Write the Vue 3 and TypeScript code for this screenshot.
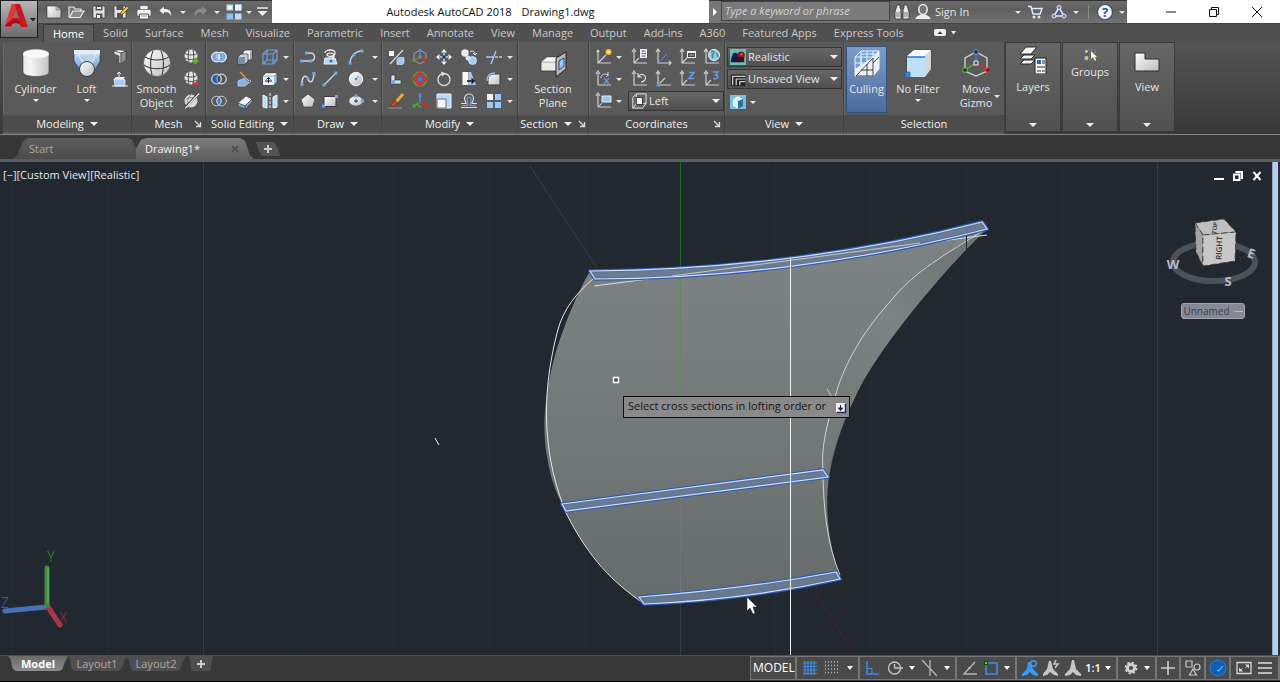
<script setup lang="ts">
import { ref } from 'vue'

type Cell = { icon: string; label: string } | 'caret' | 'gap'

const icons: Record<string, string> = {
  // quick access
  new: '<path d="M2 3h9l5 4v8H2z" fill="url(#gWhite)" stroke="#2d2d2d" stroke-width=".6"/><path d="M11 3v4h5" fill="#bbb" stroke="#666" stroke-width=".6"/>',
  open: '<path d="M2 14V4h5l1 2h6v2" fill="#777" stroke="#e6e6e6" stroke-width="1.2"/><path d="M2.500 14.500L6 8h11l-4 6.500z" fill="#8c8c8c" stroke="#f0f0f0" stroke-width="1.200"/>',
  save: '<path d="M3 3h11l1 1v11H3z" fill="#dfe3e8" stroke="#333" stroke-width=".7"/><path d="M5.500 3h7v4.500h-7zM6 10.500h6.500V15H6z" fill="#555"/><path d="M7 4h4v2H7zM7 12h3v3H7z" fill="#eee"/>',
  saveas: '<path d="M2 3h11l1 1v11H2z" fill="#dfe3e8" stroke="#333" stroke-width=".7"/><path d="M4.500 3h7v4h-7zM5 10h6v5H5z" fill="#555"/><path d="M8 12l1-3 6-6 2 2-6 6z" fill="#eeb64a" stroke="#5d3c10" stroke-width=".7"/>',
  plot: '<path d="M5 7V2.500h8V7" fill="#eee" stroke="#444" stroke-width=".6"/><rect x="2" y="6.500" width="14" height="6.500" rx="1" fill="#f2f2f2" stroke="#444" stroke-width=".6"/><path d="M4.500 11h9v5h-9z" fill="#fff" stroke="#555"/><path d="M6 13h6" stroke="#888"/>',
  undo: '<path d="M7 3L2 7.500 7 12V9.500c4-.5 6 .5 7 4.500 1.500-5-1-8.500-7-8.500z" fill="#f3f3f3" stroke="#444" stroke-width=".5"/>',
  redo: '<path d="M11 3l5 4.500L11 12V9.500C7 9 5 10 4 14 2.500 9 5 5.500 11 5.500z" fill="#8a8a8a"/>',
  workspace: '<path d="M1.500 1.500h6.500v6H1.500zM10 10.500h6.500v6H10z" fill="#b9dcff"/><path d="M10 1.500h6.500v6H10zM1.500 10.500h6.500v6H1.500z" fill="#8fbdf0"/><path d="M3 3h3.500v3H3z" fill="#fff"/><path d="M10 1.500h6.500v6H10z" fill="#e8f3ff"/>',
  custom: '<path d="M4 5h11" stroke="#eee" stroke-width="1.500"/><path d="M4.500 8h10l-5 5z" fill="#eee"/>',
  // info center
  binoculars: '<path d="M4 2h3v3l1 1v10H2V9zM14 2h-3v3l-1 1v10h6V9z" fill="#e6e6e6" stroke="#333" stroke-width=".8"/><path d="M7.500 7h3v3h-3z" fill="#666"/><path d="M4 9v5M6 9v5M12 9v5M14 9v5" stroke="#666" stroke-width=".8"/>',
  user: '<ellipse cx="9" cy="6.500" rx="4.200" ry="5" fill="#777" stroke="#efefef" stroke-width="1.500"/><path d="M1.500 16c.5-3 3-3 5-4.500h5c2 1.500 4.500 1.500 5 4.500z" fill="#efefef"/>',
  cart: '<path d="M2 3.500h3l2 7.500h7l2-5.500H6" fill="#56617c" stroke="#dfe6f5" stroke-width="1.500"/><circle cx="8" cy="14" r="1.500" fill="#dfe6f5"/><circle cx="13" cy="14" r="1.500" fill="#dfe6f5"/>',
  exchange: '<path d="M9 4.500L4 13h10z" fill="#56617c" stroke="#dfe6f5" stroke-width="1.500"/><circle cx="9" cy="4.500" r="2" fill="#6a7fb0" stroke="#dfe6f5"/><circle cx="4" cy="13" r="2" fill="#6a7fb0" stroke="#dfe6f5"/><circle cx="14" cy="13" r="2" fill="#6a7fb0" stroke="#dfe6f5"/>',
  help: '<circle cx="9" cy="9" r="7.500" fill="#f3f6fb" stroke="#3a4a72" stroke-width="1.200"/><text x="9" y="13.500" text-anchor="middle" font-family="Open Sans" font-size="13" font-weight="700" fill="#2a4e9b">?</text>',
  // modeling
  cylinder: '<path d="M1 5v18c0 6 26 6 26 0V5z" fill="url(#gCyl)" stroke="#3b3b3b" stroke-width=".6"/><ellipse cx="14" cy="5" rx="13" ry="4.500" fill="#fafafa" stroke="#d5d5d5" stroke-width=".5"/>',
  loft: '<path d="M1 1h26v11l-5 9H7L1 12z" fill="url(#gBlue)" stroke="#3b4656" stroke-width=".7"/><path d="M5 5h18l-4 9H10z" fill="#b9d2ec" stroke="#eaf3ff" stroke-width=".8"/><path d="M1 1h26v4H1z" fill="#e6edf6"/><circle cx="14" cy="20" r="7.500" fill="url(#gWhite)" stroke="#3b3b3b"/>',
  polysolid: '<path d="M3 3l7 2 5-2-7-1z" fill="#fff" stroke="#444" stroke-width=".4"/><path d="M3 3l7 2v11l-2-1V8L3 6z" fill="#e4e4e4" stroke="#333" stroke-width=".6"/><path d="M10 5l5-2v9l-5 4z" fill="#8f8f8f" stroke="#333" stroke-width=".6"/>',
  presspull: '<path d="M3 9l9-1 2 2v6H4z" fill="#a9cdf6" stroke="#dbeaff" stroke-width=".8"/><path d="M3 9l2-2h9l-2 3z" fill="#e7f1ff"/><path d="M8 8V2M6 4l2-2 2 2M1 16h16" stroke="#f0f0f0" fill="none"/>',
  // mesh
  smooth: '<circle cx="14" cy="14" r="13.500" fill="url(#gWhite)" stroke="#4a4a4a" stroke-width=".6"/><path d="M2 8c7 4 17 4 24 0M1 16c7 5 19 5 26 0M10 2c-3 7-3 17-1 24M18 2c3 7 3 17 1 24" fill="none" stroke="#2e2e2e" stroke-width="1"/>',
  meshmore: '<circle cx="9" cy="8" r="6.500" fill="#e4e4e4"/><path d="M3 5.500c4 2 8 2 12 0M3 10c4 2 8 2 12 0M7 2c-1 4-1 8 0 12M11 2c1 4 1 8 0 12" fill="none" stroke="#444" stroke-width=".9"/><path d="M13.500 10v6M10.500 13h6" stroke="#55b82e" stroke-width="2.300"/>',
  meshless: '<circle cx="9" cy="8" r="6.500" fill="#e4e4e4"/><path d="M3 5.500c4 2 8 2 12 0M3 10c4 2 8 2 12 0M7 2c-1 4-1 8 0 12M11 2c1 4 1 8 0 12" fill="none" stroke="#444" stroke-width=".9"/><path d="M10.500 13.500h6" stroke="#d8392b" stroke-width="2.300"/>',
  meshcrease: '<circle cx="9" cy="9" r="6.500" fill="#dadada"/><path d="M4 7c4-2 7-2 10 0M6 13c-1-4 0-8 3-10" fill="none" stroke="#777" stroke-width=".8"/><path d="M16.500 1.500l-14 15" stroke="#333" stroke-width="2.500"/><path d="M17 1.500l-14 15" stroke="#eee" stroke-width="1.200"/>',
  // solid editing
  union: '<circle cx="6.500" cy="9" r="4.800" fill="#7fabe4" stroke="#dcebff" stroke-width="1.300"/><circle cx="11.500" cy="9" r="4.800" fill="#7fabe4" stroke="#dcebff" stroke-width="1.300"/><path d="M9 5a5 5 0 0 1 0 8 5 5 0 0 1 0-8" fill="#dcebff" stroke="#4a7cc0" stroke-width=".7"/>',
  subtract: '<circle cx="11.500" cy="9" r="4.800" fill="#555" stroke="#ddd" stroke-width="1.200"/><circle cx="6.500" cy="9" r="4.800" fill="#2b5fa8" stroke="#a9cdf6" stroke-width="1.300"/><path d="M9 5a5 5 0 0 0 0 8 5 5 0 0 0 0-8" fill="#444" stroke="#ddd" stroke-width=".8"/>',
  intersect: '<circle cx="6.500" cy="9" r="4.800" fill="none" stroke="#ccc"/><circle cx="11.500" cy="9" r="4.800" fill="none" stroke="#ccc"/><path d="M9 5a5 5 0 0 1 0 8 5 5 0 0 1 0-8" fill="#3f7cc9" stroke="#a9cdf6"/>',
  extrude: '<path d="M7 4l2-2h7v8l-2 2H7z" fill="#f0f0f0" stroke="#333" stroke-width=".7"/><path d="M14 4l2-2v8l-2 2z" fill="#a5a5a5"/><path d="M2 9l3-3h7v7l-3 3H2z" fill="#c9ced6" stroke="#333" stroke-width=".7"/><path d="M2 9h7v7H2z" fill="#7e8ea5"/>',
  slice: '<path d="M2 11l7-3 6 3-6 5H2z" fill="#84b0e6" stroke="#c9e0ff" stroke-width=".7"/><path d="M4 2l2 1 8 8-1 1z" fill="#e8e8e8" stroke="#3a2a18" stroke-width=".6"/><path d="M4 2l5 5" stroke="#c98a45" stroke-width="2"/>',
  eraser: '<path d="M2 11l8-7 6 3-7 7z" fill="#f2f6fb" stroke="#333" stroke-width=".6"/><path d="M2 11l7 3v3l-7-3zM9 14l7-7v3l-7 7z" fill="#7ea9de" stroke="#333" stroke-width=".5"/>',
  wirebox: '<path d="M2 6h10v10H2zM6 2h10v10H6zM2 6l4-4M12 6l4-4M12 16l4-4M2 16l4-4" fill="none" stroke="#6f9fdc" stroke-width="1.200"/>',
  offsetface: '<path d="M2 6l3-3h11v9l-3 3H2z" fill="#9cc0ea" stroke="#333" stroke-width=".6"/><path d="M2 6h11v9H2z" fill="#eaf2fb"/><path d="M2 6l3-3h11l-3 3z" fill="#fff" stroke="#555" stroke-width=".5"/><path d="M4 11h7M7.500 13V8M5.500 9.500l2-2 2 2" stroke="#222" fill="none"/>',
  mirror3: '<path d="M2 3l4 2v11l-4-1zM16 3l-4 2v11l4-1z" fill="#bcdcff" stroke="#e8f3ff"/><path d="M9 1v16" stroke="#eee" stroke-dasharray="3 1"/>',
  // draw
  polyline: '<path d="M3 13h8c6 0 6-8 0-8H8" fill="none" stroke="#cfd6de" stroke-width="1.500"/><path d="M1 11.500h3v3H1zM6 3.500h3v3H6zM10 11.500h3v3h-3z" fill="#6fa5ea"/>',
  helix: '<path d="M4 10h10l2 6H3z" fill="#b6d4f7" stroke="#e5f1ff"/><path d="M4 5c0-4 10-4 10 0s-7 4-8 2 6-3 7 0-5 4-6 3" fill="none" stroke="#eee" stroke-width="1.300"/><circle cx="10" cy="13" r="1.500" fill="#2f6fce"/>',
  arc: '<path d="M3 15C3 9 8 3 15 3" fill="none" stroke="#cfd6de" stroke-width="1.300"/><path d="M1.500 13.500h3v3h-3zM5.500 5.500h3v3h-3zM13.500 1.500h3v3h-3z" fill="#6fa5ea"/>',
  spline: '<path d="M3 14C3 4 8 5 9 9s5 5 6-5" fill="none" stroke="#dfe5ec" stroke-width="1.400"/><path d="M1.500 13h3v3h-3zM13.500 2h3v3h-3zM7.500 7.500h3v3h-3z" fill="#6fa5ea"/>',
  line: '<path d="M3 15L15 3" stroke="#cfd6de" stroke-width="1.300"/><path d="M1.500 13.500h3v3h-3zM13.500 1.500h3v3h-3z" fill="#6fa5ea"/>',
  circle: '<circle cx="9" cy="9" r="6.700" fill="url(#gWhite)" stroke="#f4f4f4"/><path d="M9 9l3-3" stroke="#5b8fd6"/><circle cx="9" cy="9" r="1.300" fill="#4c86da"/>',
  polygon: '<path d="M9 2l7 5.500L13.500 15h-9L2 7.500z" fill="url(#gWhite)" stroke="#3b3b3b" stroke-width=".7"/>',
  rect: '<path d="M3 4.500h12v10H3z" fill="url(#gWhite)" stroke="#3b3b3b"/><path d="M1 12.500h3v3H1zM14 3h3v3h-3z" fill="#6fa5ea"/>',
  ellipse: '<ellipse cx="9" cy="9" rx="7" ry="5" fill="url(#gWhite)" stroke="#555" stroke-width=".6"/><path d="M9 7v4M7 9h4" stroke="#333"/><path d="M7.500 2.500h3v3h-3zM14 7.500h3v3h-3z" fill="#6fa5ea"/>',
  // modify
  align: '<path d="M16 2L3 16" stroke="#ddd" stroke-width="1.200"/><path d="M2 3h5v5H2z" fill="#f3f3f3"/><path d="M10 11l2-1.500h5V15l-1.500 1.500H10z" fill="#9cc6f8" stroke="#d6e8ff" stroke-width=".6"/>',
  move3: '<path d="M9 2l6 3.500v7L9 16l-6-3.500v-7z" fill="none" stroke="#a0a0a0"/><path d="M9 3v6" stroke="#4c8be0" stroke-width="1.500"/><path d="M9 9l-6 4" stroke="#4aa83c"/><path d="M9 9l6 4" stroke="#c33"/><path d="M7.500 1h3v3h-3z" fill="#4c8be0"/><path d="M1.500 11h3v3h-3z" fill="#4aa83c"/><path d="M13.500 11h3v3h-3z" fill="#d22"/><path d="M7.500 7.500h3v3h-3z" fill="#888"/>',
  move: '<path d="M9 1l3 3.500H6zM9 17l3-3.500H6zM1 9l3.500-3v6zM17 9l-3.500-3v6z" fill="#f0f0f0"/><path d="M9 5v8M5 9h8" stroke="#8db8ea" stroke-width="2"/><path d="M7.500 7.500h3v3h-3z" fill="#333"/>',
  copy: '<circle cx="5" cy="5" r="3.700" fill="#eee"/><circle cx="12.500" cy="12.500" r="4" fill="#a6cdf9" stroke="#dcecff" stroke-width=".7"/><circle cx="8" cy="10" r="2.500" fill="#d2e6fd"/><path d="M10 3.500c3-1 5 0 5 3M13 5l2 2 2-2" fill="none" stroke="#eee"/>',
  trim: '<path d="M1 9h7M11 3L6 16" stroke="#a9cdf6" stroke-width="1.300"/><path d="M10 9h7" stroke="#a9cdf6" stroke-width="1.300" stroke-dasharray="3 1"/>',
  lshape: '<path d="M4 5h4v5h6v4H4z" fill="#cfe2f8" stroke="#333" stroke-width=".7"/><path d="M4 10h4v4H4z" fill="#78a8e4"/>',
  rotate3: '<circle cx="9" cy="9" r="7" fill="none" stroke="#4aa83c" stroke-width="1.500"/><ellipse cx="9" cy="9" rx="4" ry="7" fill="none" stroke="#d33" stroke-width="1.500"/><ellipse cx="9" cy="9" rx="7" ry="3.500" fill="none" stroke="#d33" stroke-width="1.300"/><circle cx="9" cy="9" r="2.500" fill="#3e7fd0"/>',
  rotate: '<circle cx="9" cy="9.500" r="6" fill="none" stroke="#ddd" stroke-width="1.400"/><path d="M6 1.500l5 2-4 3z" fill="#ddd"/>',
  mirror: '<path d="M2.500 2h6v13h-6z" fill="#fafafa"/><path d="M11 2l5 13H9V2z" fill="#9cc6f8"/><path d="M7 11h7M11.500 8.500L14 11l-2.500 2.500" stroke="#111" stroke-width="1.400" fill="none"/>',
  fillet: '<path d="M3 15V9c0-3 3-5 6-5h6v11z" fill="url(#gWhite)" stroke="#3b3b3b"/><path d="M2 11c0-5 3-8 8-8" fill="none" stroke="#8ec0ff" stroke-width="1.500"/>',
  brush: '<path d="M16 2l-7 8" stroke="#e6b23c" stroke-width="2.800"/><path d="M8 8l3 3-5 4-3-1z" fill="#d24a1e" stroke="#4b1c0d" stroke-width=".6"/><path d="M2 16h13" stroke="#999"/>',
  scale3: '<path d="M9 10V3" stroke="#4c8be0" stroke-width="1.700"/><path d="M9 10l-6 4M5 12l5 3" stroke="#4aa83c" stroke-width="1.500"/><path d="M9 10l6 4" stroke="#c33" stroke-width="1.700"/><path d="M7.500 1.500h3v3h-3z" fill="#4c8be0"/><path d="M13.500 12.500h3v3h-3z" fill="#d22"/><path d="M1.500 12.500h3v3h-3z" fill="#4aa83c"/>',
  scale: '<path d="M2 2h14v14H2z" fill="#b9d7f8" stroke="#e8f1fb"/><path d="M2 7h9v9H2z" fill="#f7f7f7" stroke="#555" stroke-width=".8"/>',
  offset: '<path d="M1 15.500h16M1 11.500h5c0-2-1.500-2.500-1.500-5a4.500 4.500 0 0 1 9 0c0 2.500-1.500 3-1.500 5h5" fill="none" stroke="#ddd" stroke-width="1.200"/><path d="M2 13.500h6c0-2-1-4-1-6.500a2 2 0 0 1 4 0c0 2.500-1 4.500-1 6.500h6" fill="none" stroke="#6fa5ea"/>',
  array: '<path d="M2 2h6v6H2z" fill="#f4f4f4"/><path d="M10 2h6v6h-6zM2 10h6v6H2zM10 10h6v6h-6z" fill="#9cc6f8"/>',
  // section
  section: '<path d="M2 13l6-5h14l-3 4v10H2z" fill="#e9e9e9" stroke="#333" stroke-width=".8"/><path d="M2 13h17l3-5H8z" fill="#fafafa" stroke="#555" stroke-width=".5"/><path d="M17 9l10-6v17l-10 8z" fill="#b8b8b8" stroke="#222"/><path d="M20 12l5-3v8l-5 4z" fill="#9dc9f7" stroke="#1e4474"/>',
  // coordinates
  ucsnew: '<path d="M3 2v13h13M3 15l8-8" fill="none" stroke="#cfcfcf" stroke-width="1.200"/><circle cx="13.500" cy="4" r="3" fill="#fbb829"/><circle cx="13.500" cy="4" r="1.200" fill="#fff7c9"/><path d="M1 4l2-3 2 3z" fill="#cfcfcf"/>',
  ucsrot: '<path d="M3 3v12h13M1 4l2-3 2 3" fill="none" stroke="#cfcfcf" stroke-width="1.200"/><path d="M6 8c0-4 4-5 7-3l-2 2M13 2v4" fill="none" stroke="#ddd"/><path d="M9 8l5 6M14 8l-5 6" stroke="#5c9cf0" stroke-width="1.300"/>',
  ucsview: '<path d="M3 3v12h13M1 4l2-3 2 3" fill="none" stroke="#cfcfcf" stroke-width="1.200"/><path d="M7 4h9v6H7z" fill="#9cc6f8" stroke="#eee"/><path d="M4 14l3-3" stroke="#ddd"/>',
  ucsface: '<path d="M3 3v12h13M1 4l2-3 2 3M3 15l5-5" fill="none" stroke="#cfcfcf" stroke-width="1.200"/><path d="M9 1h7v9H9z" fill="#f3f3f3"/><path d="M10.500 3h4M10.500 5.500h2M13 5.500h2M10.500 8h4" stroke="#2d5794"/>',
  ucsobj: '<path d="M3 2v13h13M1 4l2-3 2 3M14 13l2 2-2 2" fill="none" stroke="#cfcfcf" stroke-width="1.200"/><path d="M3 15l9-9" stroke="#6b86d8"/>',
  ucsnamed: '<path d="M3 2v13h13M1 4l2-3 2 3M3 15l5-5" fill="none" stroke="#cfcfcf" stroke-width="1.200"/><path d="M8 3h9v7H8z" fill="#f3f3f3"/><path d="M9 5h7v4H9z" fill="#444"/><path d="M10 7h5" stroke="#bbb"/>',
  ucsworld: '<path d="M3 2v13h13M1 4l2-3 2 3" fill="none" stroke="#cfcfcf" stroke-width="1.200"/><circle cx="11" cy="7" r="5.500" fill="#8fc9e8" stroke="#e6f6ff"/><path d="M8 4c3-2 4 1 2 2s1 3-1 4M14 5l1 4" stroke="#4d8b62" stroke-width="1.600" fill="none"/>',
  ucsprev: '<path d="M3 3v12h13M1 4l2-3 2 3" fill="none" stroke="#cfcfcf" stroke-width="1.200"/><path d="M7 3v4h4M7 7c3-5 9-2 7 3-1 1-2 2-4 2" fill="none" stroke="#ddd" stroke-width="1.200"/>',
  ucsorigin: '<path d="M3 2v13h13M3 15l7-7M1 4l2-3 2 3" fill="none" stroke="#cfcfcf" stroke-width="1.200"/><path d="M1.500 13h3.500v3.500H1.500z" fill="#5c9cf0"/>',
  ucsz: '<path d="M3 2v13h13M3 15l5-5M1 4l2-3 2 3" fill="none" stroke="#cfcfcf" stroke-width="1.200"/><path d="M10 2.500h5L10 8.500h5" fill="none" stroke="#5c9cf0" stroke-width="1.600"/>',
  ucs3: '<path d="M3 2v13h13M3 15l5-5M1 4l2-3 2 3" fill="none" stroke="#cfcfcf" stroke-width="1.200"/><path d="M10 2h5l-2.500 3c4 0 3 5-2.500 3.500" fill="none" stroke="#5c9cf0" stroke-width="1.600"/>',
  leftcube: '<path d="M2 5l4-4h11v11l-4 5H2z" fill="#666" stroke="#f0f0f0"/><path d="M6 1v11h11M6 12l-4 5" stroke="#eee" fill="none"/><path d="M6 5h7v8H6z" fill="#f4f4f4" stroke="#222"/>',
  realistic: '<path d="M0 0h18v18H0z" fill="#63c3b8"/><path d="M1 13c1-5 2-9 5-9s3 5 5 7v4H1z" fill="#15174a"/><circle cx="12.500" cy="7" r="4.200" fill="#8f1420"/><path d="M9 9h7v6H9z" fill="#43101a"/><circle cx="13" cy="6" r="1.500" fill="#e0474c"/>',
  unsaved: '<path d="M1 4h16v13H1z" fill="#222"/><path d="M3 16V6h14M7 16V9h10M11 16v-4h6" fill="none" stroke="#cfcfcf" stroke-width="1.400"/>',
  viewbox: '<path d="M1 2h16v14H1z" fill="#79bfe0"/><path d="M4 6l5-3 5 3v7l-5 3-5-3z" fill="#2d6f9e"/><path d="M4 6l5 2v8l-5-3z" fill="#d9f3ff"/><path d="M4 6l5-3 5 3-5 2z" fill="#f4fbff"/>',
  // selection
  culling: '<path d="M2 8l6-6h18v18l-6 7H2z" fill="#6f9fd6"/><path d="M2 27V20L20 8h1l5-6v18l-6 7z" fill="#eef0f2"/><path d="M2 8h18v19H2zM8 2h18v18M8 2v19M2 8l6-6M20 8l6-6M20 27l6-7M8 8v19M14 2v25M2 14h18l6-6M2 20h18l6-6M2 27L26 2M20 2v6M8 5h16" fill="none" stroke="#e8f3ff" stroke-width="1"/><path d="M3 27L20 9v18zM14 15v12M8 21h12M20 14l6-6" stroke="#222" stroke-width=".8" fill="none"/>',
  nofilter: '<path d="M3 7l7-6h17v19l-6 8H3z" fill="#b7b7b7" stroke="#333" stroke-width=".7"/><path d="M3 7h18v21H3z" fill="#bfe0fc"/><path d="M3 7l7-6h17l-6 6z" fill="#fbfbfb"/><path d="M21 7l6-6v19l-6 8z" fill="#d6d6d6"/><path d="M3 8h18" stroke="#4e94ea" stroke-width="2"/><path d="M1 23h5v5H1z" fill="#3c86e0" stroke="#1d4d8c" stroke-width=".6"/>',
  gizmo: '<path d="M14 3l11 6v13l-11 5-11-5V9z" fill="none" stroke="#d6d6d6" stroke-width="1.300"/><path d="M14 4v10" stroke="#5a78d8" stroke-width="1.500"/><path d="M14 14L3 21" stroke="#4aa83c" stroke-width="1.500"/><path d="M14 14l11 7" stroke="#c33" stroke-width="1.500"/><path d="M12 1h4v4h-4z" fill="#222" stroke="#5a8fe8"/><path d="M1 19h4v4H1z" fill="#222" stroke="#5c3"/><path d="M24 19h4v4h-4z" fill="#622" stroke="#e33"/><path d="M12 12h4v4h-4z" fill="#555" stroke="#eee"/>',
  layers: '<path d="M1 8l6-7h11l-6 7zM1 13l4-4h11l-4 4zM1 18l4-4h11l-4 4z" fill="#f4f4f4" stroke="#2b2b2b"/><path d="M16 12h11v16H16z" fill="#f2f2f2" stroke="#222"/><path d="M18 14h4v4h-4z" fill="#2c62b8"/><path d="M23 15h3M23 17h3M18 21h8M18 25h4M23 25h3" stroke="#333"/>',
  groups: '<path d="M4 4h10v10H4z" fill="none" stroke="#7da6db" stroke-dasharray="1 2"/><path d="M4 4h3v3H4z" fill="#f2e48b" stroke="#444" stroke-width=".5"/><circle cx="5.500" cy="12" r="2" fill="#b7cf8c"/><path d="M10 5v8l2-2 2 4 1-1-1-3h2z" fill="#fff7c9"/>',
  viewport: '<path d="M2 7h10v6h14v12H2z" fill="url(#gWhite)" stroke="#2f2f2f"/>',
  // status bar
  grid: '<path d="M4 2v14M7 2v14M10 2v14M13 2v14M2 4h14M2 7.500h14M2 11h14M2 14.500h14" stroke="#3a8ee6" stroke-width="1.200"/>',
  snap: '<path d="M2 3h14M2 6.500h14M2 10h14M2 13.500h14" stroke="#b9b9b9" stroke-width="1.300" stroke-dasharray="1 2"/>',
  ortho: '<path d="M3 2v13h12" fill="none" stroke="#3a8ee6" stroke-width="1.500"/><path d="M3 9.500h5V15" fill="none" stroke="#3a8ee6"/>',
  polar: '<circle cx="8.500" cy="9" r="6" fill="none" stroke="#c6c6c6" stroke-width="1.300"/><path d="M8.500 9H17M8.500 9V5" stroke="#c6c6c6" stroke-width="1.300"/>',
  iso: '<path d="M1 1l15 16M9 1v16" stroke="#b5b5b5" stroke-width="1.300"/>',
  angle: '<path d="M14 3L3 15h13" fill="none" stroke="#b5b5b5" stroke-width="1.400"/><circle cx="8.500" cy="9" r="1.300" fill="#b5b5b5"/>',
  osnap: '<path d="M4 4h11v11H4z" fill="none" stroke="#3a8ee6" stroke-width="1.600"/><circle cx="4" cy="4" r="2.300" fill="#073a07"/><circle cx="4" cy="4" r="1.300" fill="#33e233"/>',
  annvis: '<path d="M7 3h3l2 7 5 5v2l-5-1-3-3-3 3-5 1v-2l5-5z" fill="#3a9af5"/><circle cx="12.500" cy="4.500" r="2.800" fill="#4a4a4a" stroke="#3a9af5" stroke-width="1.500"/>',
  annauto: '<path d="M7 2h2l2 8 5 5v2l-4-1-4-3-3 3-4 1v-2l4-5z" fill="#c6c6c6"/><path d="M14 1l-2 4h4l-3 4" fill="none" stroke="#c6c6c6" stroke-width="1.500"/>',
  annscale: '<path d="M8 1h2l2 9 5 5v2l-5-1-3-3-3 3-5 1v-2l5-5z" fill="#c6c6c6"/>',
  gear: '<circle cx="9" cy="9" r="3.600" fill="none" stroke="#d0d0d0" stroke-width="3"/><circle cx="9" cy="9" r="5.500" fill="none" stroke="#d0d0d0" stroke-width="1.800" stroke-dasharray="2.300 2"/>',
  plus: '<path d="M9 2v14M2 9h14" stroke="#d0d0d0" stroke-width="1.600"/>',
  shapes: '<path d="M2 2h6v6H2zM9 10l3.500 6h-7z" fill="none" stroke="#c8c8c8" stroke-width="1.200"/><circle cx="13" cy="8" r="3" fill="none" stroke="#c8c8c8" stroke-width="1.200"/>',
  perf: '<circle cx="9" cy="9" r="8" fill="#0d5fb3" stroke="#2b7fd6"/><path d="M8 11l1.500 1L14 7" fill="none" stroke="#69a9e8" stroke-width="1.200"/>',
  clean: '<path d="M2 3.500h14v11H2z" fill="none" stroke="#d6d6d6" stroke-width="1.300"/><path d="M10 5.500h4v4zM8 12.500H4v-4z" fill="#d6d6d6"/><path d="M13 6.500L10.500 9M5 12l2.500-2.500" stroke="#d6d6d6"/>',
  menu: '<path d="M2 4h14M2 9h14M2 14h14" stroke="#dedede" stroke-width="1.500"/>',
}

const menuTabs = ['Home', 'Solid', 'Surface', 'Mesh', 'Visualize', 'Parametric', 'Insert', 'Annotate', 'View', 'Manage', 'Output', 'Add-ins', 'A360', 'Featured Apps', 'Express Tools']
const activeMenu = ref('Home')
const activeLayout = ref('Model')
const search = ref('')
const visualStyle = ref('Realistic')
const savedView = ref('Unsaved View')
const ucs = ref('Left')

const c = (icon: string, label: string): Cell => ({ icon, label })

const quick: Cell[] = [
  c('new', 'New'), c('open', 'Open'), c('save', 'Save'), c('saveas', 'Save As'), c('plot', 'Plot'), c('undo', 'Undo'), 'caret',
  c('redo', 'Redo'), 'caret', c('workspace', 'Workspace'), 'caret', c('custom', 'Customize'),
]
const solidCells: Cell[] = [
  c('union', 'Union'), c('extrude', 'Extrude Faces'), c('wirebox', 'Extract Edges'), 'caret',
  c('subtract', 'Subtract'), c('slice', 'Slice'), c('offsetface', 'Offset Face'), 'caret',
  c('intersect', 'Intersect'), c('eraser', 'Thicken'), c('mirror3', 'Separate'), 'caret',
]
const drawCells: Cell[] = [
  c('polyline', 'Polyline'), c('helix', 'Helix'), c('arc', 'Arc'), 'caret',
  c('spline', 'Spline'), c('line', 'Line'), c('circle', 'Circle'), 'caret',
  c('polygon', 'Polygon'), c('rect', 'Rectangle'), c('ellipse', 'Ellipse'), 'caret',
]
const modifyCells: Cell[] = [
  c('align', '3D Align'), c('move3', '3D Move'), c('move', 'Move'), c('copy', 'Copy'), c('trim', 'Trim'), 'caret',
  c('lshape', 'Overkill'), c('rotate3', '3D Rotate'), c('rotate', 'Rotate'), c('mirror', '3D Mirror'), c('fillet', 'Fillet'), 'caret',
  c('brush', 'Erase'), c('scale3', '3D Scale'), c('scale', 'Scale'), c('offset', 'Offset'), c('array', 'Array'), 'caret',
]
const coordCells: Cell[] = [
  c('ucsnew', 'UCS'), 'caret', 'gap', c('ucsface', 'Face'), c('ucsobj', 'Object'), c('ucsnamed', 'Named UCS'), c('ucsworld', 'World'),
  c('ucsrot', 'X Axis Rotate'), 'caret', 'gap', c('ucsprev', 'Previous'), c('ucsorigin', 'Origin'), c('ucsz', 'Z-Axis Vector'), c('ucs3', '3-Point'),
  c('ucsview', 'View UCS'), 'caret', 'gap',
]
const cellPanels = [
  { name: 'Solid Editing', cls: 'p-solid', cells: solidCells },
  { name: 'Draw', cls: 'p-draw', cells: drawCells },
  { name: 'Modify', cls: 'p-modify', cells: modifyCells },
]
const collapsed = [
  { name: 'Layers', icon: 'layers', cls: 'big' },
  { name: 'Groups', icon: 'groups', cls: 'small' },
  { name: 'View', icon: 'viewport', cls: 'big' },
]
const layouts = ['Model', 'Layout1', 'Layout2']

const statusGroups: { cls: string; cells: Cell[]; text?: string }[] = [
  { cls: 'g-grid', cells: [c('grid', 'Grid'), c('snap', 'Snap'), 'caret'] },
  { cls: 'g-ortho', cells: [c('ortho', 'Ortho'), c('polar', 'Polar'), 'caret', c('iso', 'Isometric'), 'caret'] },
  { cls: 'g-snap', cells: [c('angle', 'Tracking'), c('osnap', 'Object Snap'), 'caret'] },
  { cls: 'g-ann', text: '1:1', cells: [c('annvis', 'Annotation Visibility'), c('annauto', 'AutoScale'), c('annscale', 'Annotation Scale'), 'caret'] },
  { cls: 'g-gear', cells: [c('gear', 'Workspace Switching'), 'caret'] },
  { cls: 'g-one', cells: [c('plus', 'Annotation Monitor')] },
  { cls: 'g-two', cells: [c('shapes', 'Isolate Objects')] },
  { cls: 'g-two', cells: [c('perf', 'Graphics Performance')] },
  { cls: 'g-end', cells: [c('clean', 'Clean Screen'), c('menu', 'Customization')] },
]
const gridLines = [12, 108, 203, 298, 393, 489, 585, 680, 775, 870, 966, 1062, 1157, 1253]
</script>

<template>
  <div class="app">
    <svg class="defs" aria-hidden="true">
      <defs>
        <linearGradient id="gWhite" x1="0" y1="0" x2="1" y2="1"><stop offset="0" stop-color="#fff" /><stop offset="1" stop-color="#b9bcc0" /></linearGradient>
        <linearGradient id="gBlue" x1="0" y1="0" x2="0" y2="1"><stop offset="0" stop-color="#dbe8f7" /><stop offset="1" stop-color="#6d9fd8" /></linearGradient>
        <linearGradient id="gCyl" x1="0" y1="0" x2="1" y2="0"><stop offset="0" stop-color="#e9e9e9" /><stop offset=".3" stop-color="#f6f6f6" /><stop offset="1" stop-color="#c3c3c3" /></linearGradient>
      </defs>
    </svg>

    <header class="top">
      <button class="app-btn" aria-label="Application menu">
        <svg width="36" height="36" viewBox="0 0 36 36">
          <path d="M4 26L11 3h8l8 23h-7l-2-5-7 1-1 4z" fill="#c9171f" />
          <path d="M10 17l5-9 3 9z" fill="#8a6a6a" />
          <path d="M4 26L11 3l3 0 1 5-5 12 0 6z" fill="#e3343a" />
          <path d="M4 25c5-7 10-7 14-6l2 5c-5-3-9-2-10 1z" fill="#a80f16" />
          <path d="M29 17h6l-3 3.500z" fill="#222" />
        </svg>
      </button>

      <div class="titlebar">
        <div class="quick">
          <template v-for="(q, i) in quick" :key="i">
            <button v-if="q === 'caret'" class="caret" aria-label="More" />
            <button v-else-if="q !== 'gap'" class="tool" :aria-label="q.label"><svg viewBox="0 0 18 18" v-html="icons[q.icon]" /></button>
          </template>
        </div>
        <h1 class="title"><span>Autodesk AutoCAD 2018</span><span>Drawing1.dwg</span></h1>
        <div class="info">
          <button class="search-arrow" aria-label="Collapse search" />
          <input v-model="search" class="search" type="text" placeholder="Type a keyword or phrase" aria-label="Search" />
          <button class="tool" aria-label="Find"><svg viewBox="0 0 18 18" v-html="icons.binoculars" /></button>
          <button class="signin"><svg viewBox="0 0 18 18" v-html="icons.user" />Sign In</button>
          <button class="caret" aria-label="Account options" />
          <button class="tool cart" aria-label="Store"><svg viewBox="0 0 18 18" v-html="icons.cart" /></button>
          <button class="tool" aria-label="Exchange"><svg viewBox="0 0 18 18" v-html="icons.exchange" /></button>
          <button class="caret" aria-label="Exchange options" />
          <i class="divider" />
          <button class="tool" aria-label="Help"><svg viewBox="0 0 18 18" v-html="icons.help" /></button>
          <button class="caret" aria-label="Help options" />
        </div>
        <div class="win">
          <button aria-label="Minimize"><svg viewBox="0 0 12 12"><path d="M1 6h10" /></svg></button>
          <button aria-label="Restore"><svg viewBox="0 0 12 12"><path d="M1.500 3.500h7v7h-7zM3.500 3.500v-2h7v7h-2" /></svg></button>
          <button aria-label="Close"><svg viewBox="0 0 12 12"><path d="M1 1l10 10M11 1L1 11" /></svg></button>
        </div>
      </div>

      <nav class="menu">
        <button v-for="t in menuTabs" :key="t" :class="{ on: t === activeMenu }" @click="activeMenu = t">{{ t }}</button>
        <button class="ribbon-toggle" aria-label="Minimize ribbon">
          <svg width="24" height="10" viewBox="0 0 24 10"><rect x="1" y="1" width="12" height="7" rx="2" fill="#eee" /><path d="M4.500 6h5L7 3.200z" fill="#333" /><path d="M18 3h5l-2.500 3.500z" fill="#eee" /></svg>
        </button>
      </nav>
    </header>

    <section class="ribbon" aria-label="Ribbon">
      <div class="panel p-modeling">
        <div class="body">
          <button class="big"><svg viewBox="0 0 28 28" v-html="icons.cylinder" /><span>Cylinder</span><i class="tri" /></button>
          <button class="big"><svg viewBox="0 0 28 28" v-html="icons.loft" /><span>Loft</span><i class="tri" /></button>
          <div class="cells one">
            <button class="tool" aria-label="Polysolid"><svg viewBox="0 0 18 18" v-html="icons.polysolid" /></button>
            <button class="tool" aria-label="Presspull"><svg viewBox="0 0 18 18" v-html="icons.presspull" /></button>
          </div>
        </div>
        <button class="ptitle">Modeling<i class="tri wide" /></button>
      </div>

      <div class="panel p-mesh">
        <div class="body">
          <button class="big"><svg viewBox="0 0 28 28" v-html="icons.smooth" /><span>Smooth<br />Object</span></button>
          <div class="cells one">
            <button class="tool" aria-label="Smooth more"><svg viewBox="0 0 18 18" v-html="icons.meshmore" /></button>
            <button class="tool" aria-label="Smooth less"><svg viewBox="0 0 18 18" v-html="icons.meshless" /></button>
            <button class="tool" aria-label="Refine mesh"><svg viewBox="0 0 18 18" v-html="icons.meshcrease" /></button>
          </div>
        </div>
        <button class="ptitle spread"><span>Mesh</span><svg class="launch" viewBox="0 0 8 8"><path d="M1 1l5 5M6.500 2v4.500H2" /></svg></button>
      </div>

      <div v-for="p in cellPanels" :key="p.name" class="panel" :class="p.cls">
        <div class="body">
          <div class="cells">
            <template v-for="(x, i) in p.cells" :key="i">
              <button v-if="x === 'caret'" class="caret" aria-label="More" />
              <button v-else-if="x !== 'gap'" class="tool" :aria-label="x.label"><svg viewBox="0 0 18 18" v-html="icons[x.icon]" /></button>
            </template>
          </div>
        </div>
        <button class="ptitle">{{ p.name }}<i class="tri wide" /></button>
      </div>

      <div class="panel p-section">
        <div class="body">
          <button class="big"><svg viewBox="0 0 28 28" v-html="icons.section" /><span>Section<br />Plane</span></button>
        </div>
        <button class="ptitle">Section<i class="tri wide" /><svg class="launch" viewBox="0 0 8 8"><path d="M1 1l5 5M6.500 2v4.500H2" /></svg></button>
      </div>

      <div class="panel p-coord">
        <div class="body">
          <div class="cells">
            <template v-for="(x, i) in coordCells" :key="i">
              <button v-if="x === 'caret'" class="caret" aria-label="More" />
              <i v-else-if="x === 'gap'" />
              <button v-else class="tool" :aria-label="x.label"><svg viewBox="0 0 18 18" v-html="icons[x.icon]" /></button>
            </template>
            <label class="combo ucs">
              <svg viewBox="0 0 18 18" v-html="icons.leftcube" />
              <select v-model="ucs" aria-label="UCS"><option>Left</option><option>Top</option><option>Front</option></select>
              <i class="tri wide" />
            </label>
          </div>
        </div>
        <button class="ptitle spread"><span>Coordinates</span><svg class="launch" viewBox="0 0 8 8"><path d="M1 1l5 5M6.500 2v4.500H2" /></svg></button>
      </div>

      <div class="panel p-view">
        <div class="body stack">
          <label class="combo">
            <svg viewBox="0 0 18 18" v-html="icons.realistic" />
            <select v-model="visualStyle" aria-label="Visual style"><option>Realistic</option><option>Wireframe</option></select>
            <i class="tri wide" />
          </label>
          <label class="combo">
            <svg viewBox="0 0 18 18" v-html="icons.unsaved" />
            <select v-model="savedView" aria-label="Saved view"><option>Unsaved View</option><option>Top</option></select>
            <i class="tri wide" />
          </label>
          <div class="line">
            <button class="tool" aria-label="Viewport"><svg viewBox="0 0 18 18" v-html="icons.viewbox" /></button>
            <button class="caret" aria-label="More" />
          </div>
        </div>
        <button class="ptitle">View<i class="tri wide" /></button>
      </div>

      <div class="panel p-select">
        <div class="body">
          <button class="big culling"><svg viewBox="0 0 28 28" v-html="icons.culling" /><span>Culling</span></button>
          <button class="big filter"><svg viewBox="0 0 28 28" v-html="icons.nofilter" /><span>No Filter</span><i class="tri" /></button>
          <button class="big giz"><svg viewBox="0 0 28 28" v-html="icons.gizmo" /><span>Move<br />Gizmo</span></button>
          <button class="caret giz-caret" aria-label="Gizmo options" />
        </div>
        <button class="ptitle">Selection</button>
      </div>

      <button v-for="(p, i) in collapsed" :key="i" class="folded" :class="p.cls">
        <svg :viewBox="p.cls === 'big' ? '0 0 28 28' : '0 0 18 18'" v-html="icons[p.icon]" />
        <span>{{ p.name }}</span>
        <i class="tri wide" />
      </button>
    </section>

    <nav class="files">
      <button class="file start">Start</button>
      <button class="file drawing">Drawing1*<svg viewBox="0 0 8 8"><path d="M1 1l6 6M7 1L1 7" /></svg></button>
      <button class="file add" aria-label="New drawing"><svg viewBox="0 0 8 8"><path d="M4 0v8M0 4h8" /></svg></button>
    </nav>

    <main class="stage">
      <div class="viewport">
        <svg class="scene" viewBox="0 162 1272 493" preserveAspectRatio="xMidYMid slice">
          <defs>
            <linearGradient id="surf" x1="0" y1="0" x2="0" y2="1"><stop offset="0" stop-color="#7e8383" /><stop offset=".5" stop-color="#747979" /><stop offset="1" stop-color="#666c6c" /></linearGradient>
            <linearGradient id="side" x1="1" y1="0" x2="0" y2="1"><stop offset="0" stop-color="#6a7171" /><stop offset=".45" stop-color="#7d8383" /><stop offset="1" stop-color="#717777" /></linearGradient>
          </defs>
          <path v-for="x in gridLines" :key="x" :d="`M${x}.5 162V655`" :stroke="x === 203 || x === 1157 || x === 680 ? '#333b44' : '#242c34'" />
          <path d="M530 166L597 268" stroke="#3a4249" />
          <path d="M815 593L855 655" stroke="#561d2a" />
          <path d="M590 271C720 270 850 255 982 222L987 229C950 263 880 345 857 393C822 465 820 515 840 578Q745 601 643 604C600 572 580 540 566 513C556 492 551 480 548 462C541 430 545 395 553 363C560 335 575 297 590 271z" fill="url(#surf)" />
          <path d="M984 231C930 262 905 275 870 327C845 362 838 382 828 423C820 455 823 470 826 490C826 450 842 425 857 393C880 345 950 263 984 231z" fill="url(#side)" />
          <path d="M680.500 162V270" stroke="#1d6a26" /><path d="M680.500 270V392" stroke="#5d8a5e" /><path d="M680.500 392V592" stroke="#707776" />
          <path d="M593 279C578 292 563 308 557 333C549 365 545 395 547 430C549 460 555 485 566 513C590 560 613 582 643 603" fill="none" stroke="#e4e7e7" />
          <path d="M984 230C947 254 915 270 889 303C860 335 845 365 837 390C827 425 821 445 823 470C823 505 827 545 840 575" fill="none" stroke="#d0d4d4" />
          <path d="M594 286L987 235" stroke="#dfe1dc" /><path d="M827 389L832 397" stroke="#ccc" />
          <path d="M966.500 225V250" stroke="#20282d" />
          <g fill="#5b7fc0" fill-opacity=".35" stroke="#2f5bb5" stroke-width="3.500" stroke-linejoin="round">
            <path d="M590 271C720 270 850 256 982 222L987 229C860 262 720 279 595 279z" /><path d="M562 504L823 470L828 477L566 511z" /><path d="M639 597Q745 589 836 572L840 579Q745 600 644 604z" />
          </g>
          <g fill="#6a7b90" fill-opacity=".8" stroke="#cfe0ff" stroke-width="1.200">
            <path d="M590 271C720 270 850 256 982 222L987 229C860 262 720 279 595 279z" /><path d="M562 504L823 470L828 477L566 511z" /><path d="M639 597Q745 589 836 572L840 579Q745 600 644 604z" />
          </g>
          <path d="M672 276L920 243" stroke="#d9d4c4" stroke-width=".8" />
          <path d="M790.500 258V655" stroke="#f2f4f4" />
          <path d="M435 438L439 445" stroke="#eee" />
          <path d="M613.500 377.500h5v5h-5z" fill="#555" stroke="#fff" stroke-width="1.300" />
          <g stroke-linecap="round" stroke-width="5">
            <path d="M46 607L5 611" stroke="#4671b5" /><path d="M48 607L60 625" stroke="#a93545" /><path d="M47 605V568" stroke="#43893f" /><path d="M48 603V568" stroke="#6bb965" stroke-width="1" />
          </g>
          <g class="axis"><text x="51" y="562" fill="#2b9b36">Y</text><text x="63" y="623" fill="#ad2438">X</text><text x="5" y="608" fill="#2b66c9">Z</text></g>
          <ellipse cx="1214" cy="262" rx="41" ry="19" fill="none" stroke="#4b525a" stroke-width="6" />
          <g stroke="#333" stroke-width=".8" stroke-dasharray="6 3">
            <path d="M1195 223L1224 219L1236 232L1203 235z" fill="#bfbfbf" /><path d="M1195 223L1203 235V266L1196 252z" fill="#a3a3a3" /><path d="M1203 235L1236 232L1235 261L1203 266z" fill="#c8c8c8" />
          </g>
          <g class="compass"><text x="1173" y="269">W</text><text x="1251" y="258" transform="rotate(20 1251 254)">E</text><text x="1228" y="286">S</text></g>
          <text class="face" x="1219" y="251" transform="rotate(-88 1219 248)">RIGHT</text>
          <text class="face tiny" x="1215" y="230" transform="rotate(-80 1215 228)">TOP</text>
          <path d="M747 597v14l3-3 3 6 2-1-2-6h4z" fill="#fff" stroke="#333" stroke-width=".6" />
        </svg>
        <p class="vp-label">[−][Custom View][Realistic]</p>
        <div class="vp-win">
          <button aria-label="Minimize viewport"><svg viewBox="0 0 10 10"><path d="M0 8h10" /></svg></button>
          <button aria-label="Restore viewport"><svg viewBox="0 0 10 10"><path d="M1 3.500h5.500V9H1zM3.500 2V1H9v6H8" /></svg></button>
          <button aria-label="Close viewport"><svg viewBox="0 0 10 10"><path d="M1.500 1l7 8M8.500 1l-7 8" /></svg></button>
        </div>
        <button class="unnamed">Unnamed<i /></button>
        <div class="prompt" role="tooltip">Select cross sections in lofting order or
          <svg viewBox="0 0 11 11"><path d="M0 0h9v9H0z" fill="#eee" /><path d="M9.500 1v8.500H1" fill="none" stroke="#232a8c" stroke-width="1.500" /><path d="M2.500 5h4L4.500 7.500zM4.500 2v3" fill="#222" stroke="#222" /></svg>
        </div>
      </div>
      <div class="edge" />
    </main>

    <footer class="bottom">
      <nav class="layouts">
        <button v-for="l in layouts" :key="l" :class="{ on: l === activeLayout }" @click="activeLayout = l">{{ l }}</button>
        <button class="plus" aria-label="New layout"><svg viewBox="0 0 8 8"><path d="M4 0v8M0 4h8" /></svg></button>
      </nav>
      <div class="status">
        <div class="group g-model"><button class="txt">MODEL</button></div>
        <div v-for="(g, gi) in statusGroups" :key="gi" class="group" :class="g.cls">
          <template v-for="(x, i) in g.cells" :key="i">
            <button v-if="x === 'caret' && g.text" class="txt scale">{{ g.text }}</button>
            <button v-if="x === 'caret'" class="caret" aria-label="More" />
            <button v-else-if="x !== 'gap'" class="tool" :aria-label="x.label"><svg viewBox="0 0 18 18" v-html="icons[x.icon]" /></button>
          </template>
        </div>
      </div>
    </footer>
  </div>
</template>

<style>
body { margin: 0; background: #000; }
</style>

<style scoped>
.app {
  display: flex; flex-direction: column; min-height: 100vh; overflow: hidden;
  font: 11px/14px "Open Sans", "Noto Sans", sans-serif; color: #e6e6e6; background: #383838;
}
* { box-sizing: border-box; }
button, input, select { font: inherit; color: inherit; border: 0; padding: 0; margin: 0; background: none; }
button { display: flex; align-items: center; justify-content: center; white-space: nowrap; }
svg { display: block; flex: none; }
.defs { position: absolute; width: 0; height: 0; }
.tool svg, .signin svg { width: 18px; height: 18px; }
.tri { width: 0; height: 0; flex: none; border: 3px solid transparent; border-top-color: #eee; border-bottom: 0; }
.tri.wide { border-width: 4px 4px 0; }
.caret::after { content: ""; border: 3px solid transparent; border-top-color: #e6e6e6; border-bottom: 0; }

/* header */
.top { display: grid; grid-template: 23px 19px / 38px 1fr; background: #535353; }
.app-btn { grid-row: 1 / 3; height: 38px; border: 1px solid #1e1e1e; background: linear-gradient(#b8b8b8, #6b6b6b); }
.titlebar { display: flex; background: #fff; }
.quick, .info { background: linear-gradient(#6b6b6b, #5f5f5f 40%, #737373); border-top: 1px solid #333; }
.quick { display: grid; grid-template-columns: 22px 22px 23px 22px 23px 22px 12px 22px 12px 22px 8px 18px; padding: 0 1px 0 5px; }
.title { flex: 1; margin: 0; display: flex; gap: 10px; align-items: center; justify-content: center; font-size: 11px; font-weight: 400; color: #111; white-space: nowrap; }
.info { display: flex; align-items: stretch; width: 418px; }
.search-arrow { width: 12px; background: #777; }
.search-arrow::after { content: ""; border: 4px solid transparent; border-left-color: #fff; border-right: 0; }
.search { width: 169px; margin-bottom: 2px; padding: 0 3px; border: 1px solid #444; background: #7a7a7a; color: #eee; }
.search::placeholder { color: #d2d2d2; font-style: italic; opacity: 1; }
.info .tool { width: 24px; }
.info .caret { width: 10px; }
.signin { gap: 3px; margin-right: auto; }
.divider { width: 1px; margin: 4px 4px 4px 7px; background: #8a8a8a; }
.win { display: flex; width: 153px; padding-left: 22px; }
.win button { width: 43px; }
.win svg { width: 12px; height: 12px; fill: none; stroke: #111; stroke-width: 1; }
.menu { display: flex; padding-left: 5px; background: #505050; border-top: 1px solid #444; }
.menu button { padding: 0 8px 0 9px; color: #c9c9c9; }
.menu button.on { padding-right: 9px; background: #5d5d5d; border: 1px solid #3a3a3a; border-bottom: 0; color: #fff; }
.menu .ribbon-toggle { padding-left: 21px; }

/* ribbon */
.ribbon { display: flex; height: 93px; padding-left: 3px; border-bottom: 1px solid #858585; background: linear-gradient(#545454, #383838); }
.panel { display: flex; flex-direction: column; flex: none; border-right: 1px solid #424242; box-shadow: inset 1px 0 #686868; background: #5a5a5a; }
.body { display: flex; flex: 1; padding-top: 4px; }
.ptitle { height: 17px; margin-bottom: 2px; gap: 6px; background: #4c4c4c; color: #f0f0f0; }
.spread { padding: 0 3px 0 11px; }
.spread span { flex: 1; }
.spread { gap: 0; }
.launch { width: 8px; height: 8px; fill: none; stroke: #ddd; stroke-width: 1.3; }
.big { flex-direction: column; justify-content: flex-start; padding-top: 3px; text-align: center; }
.big svg { width: 28px; height: 28px; margin-bottom: 5px; }
.big .tri { margin-top: 3px; }
.cells { display: grid; grid-auto-rows: 22px; align-content: start; }
.one { grid-template-columns: 22px; }
.p-modeling { width: 129px; }
.p-modeling .big { width: 51px; }
.p-modeling .body { padding-left: 7px; }
.p-modeling .one { margin-left: -3px; }
.p-mesh { width: 74px; }
.p-mesh .big { width: 49px; }
.p-mesh .one { margin-left: -1px; }
.p-solid { width: 88px; }
.p-solid .cells { grid-template-columns: 26px 26px 24px 8px; }
.p-draw { width: 88px; }
.p-draw .cells { grid-template-columns: 22px 22px 30px 8px; padding-left: 3px; }
.p-modify { width: 136px; }
.p-modify .cells { grid-template-columns: 24px 24px 24px 26px 24px 8px; padding-left: 2px; }
.p-section { width: 71px; }
.p-section .big { width: 100%; }
.p-coord { width: 136px; }
.p-coord .cells { grid-template-columns: 22px 8px 5px 24px 24px 24px 24px; padding-left: 4px; }
.p-view { width: 119px; }
.p-select { width: 161px; }
.ucs { grid-column: 4 / 8; margin-top: 1px; }
.combo { display: flex; align-items: center; height: 20px; padding: 0 3px 0 2px; border: 1px solid #333; background: linear-gradient(#666, #505050); }
.combo svg { width: 16px; height: 16px; }
.combo select { flex: 1; min-width: 0; padding-left: 2px; appearance: none; }
.stack { flex-direction: column; gap: 2px; padding: 5px 1px 0 2px; }
.line { display: flex; }
.line .tool { width: 22px; height: 22px; }
.line .caret { width: 8px; }
.p-select .body { padding-left: 2px; }
.culling { width: 41px; height: 67px; background: linear-gradient(#7d9cc9, #4a6b9e); border: 1px solid #34507c; padding-top: 2px; }
.filter { width: 62px; }
.giz { width: 54px; }
.giz-caret { width: 6px; height: 22px; margin: 39px 0 0 -9px; align-self: flex-start; }
.folded { flex-direction: column; justify-content: flex-start; width: 56px; height: 90px; margin-right: 1px; padding: 3px 0 4px; border: 1px solid #3a3a3a; background: linear-gradient(#666, #505050); }
.folded svg { width: 28px; height: 28px; margin-bottom: 6px; }
.folded.small svg { width: 18px; height: 18px; margin-bottom: 1px; }
.folded .tri { margin-top: auto; }

/* file tabs */
.files { display: flex; align-items: flex-end; height: 27px; padding-left: 12px; background: #373737; border-bottom: 3px solid #5b5c5f; }
.file { height: 21px; color: #a9a9a9; background: linear-gradient(#5d5d5d, #4b4b4b); clip-path: polygon(0 100%, 5px 85%, 11px 15%, 16px 0, calc(100% - 8px) 0, calc(100% - 4px) 10%, 100% 50%, 100% 100%); }
.start { width: 124px; padding: 0 0 0 17px; justify-content: flex-start; }
.drawing { width: 118px; padding: 0 15px 0 9px; justify-content: space-between; color: #f2f2f2; background: linear-gradient(#7c7c7c, #5f5f5f); clip-path: polygon(0 100%, 0 50%, 5px 10%, 10px 0, calc(100% - 14px) 0, calc(100% - 9px) 12%, calc(100% - 4px) 85%, 100% 100%); }
.drawing svg { width: 8px; height: 8px; stroke: #494949; stroke-width: 1.5; }
.add { width: 24px; height: 14px; margin: 0 0 3px 2px; background: #545454; clip-path: polygon(0 0, 75% 0, 90% 40%, 100% 100%, 25% 100%, 10% 60%); }
.add svg, .plus svg { width: 8px; height: 8px; stroke: #ccc; stroke-width: 2; }

/* drawing area */
.stage { display: flex; flex: 1; }
.viewport { position: relative; flex: 1; background: #212830; overflow: hidden; }
.scene { position: absolute; inset: 0; width: 100%; height: 100%; }
.edge { width: 8px; background: #b8cfec; border-left: 1px solid #8ba6c8; border-right: 2px solid #2a3036; }
.axis { font-size: 14px; font-weight: 300; text-anchor: middle; }
.compass { font-size: 13px; font-weight: 700; fill: #b9bcc0; text-anchor: middle; }
.face { font-size: 8px; font-weight: 600; fill: #333; text-anchor: middle; }
.tiny { font-size: 6px; }
.vp-label { position: absolute; left: 3px; top: 6px; margin: 0; }
.vp-win { position: absolute; right: 8px; top: 7px; display: flex; gap: 5px; }
.vp-win button { width: 14px; height: 14px; }
.vp-win svg { width: 10px; height: 10px; fill: none; stroke: #fff; stroke-width: 2; }
.unnamed { position: absolute; right: 27px; top: 141px; width: 64px; height: 16px; gap: 5px; border: 1px solid #a2a5ad; border-radius: 3px; background: #868993; color: #3b3f4a; font-size: 10px; }
.unnamed i { width: 8px; border-top: 1px solid #b9bcc4; }
.prompt { position: absolute; left: 623px; top: 234px; display: flex; align-items: center; justify-content: space-between; width: 227px; height: 22px; padding: 0 2px 2px 4px; border: 1px solid #111; background: #8b8a8b; color: #151515; white-space: nowrap; }
.prompt svg { width: 11px; height: 11px; margin-top: 4px; }

/* bottom */
.bottom { display: flex; justify-content: space-between; height: 27px; border-bottom: 1px solid #000; border-top: 1px solid #4d4d4d; background: #383838; }
.layouts { display: flex; padding-left: 8px; }
.layouts button { width: 60px; height: 15px; margin-right: -1px; color: #aaa; background: #4f4f4f; clip-path: polygon(0 0, 100% 0, 95% 40%, 90% 90%, 85% 100%, 13% 100%, 8% 85%, 4% 20%); }
.layouts button.on { font-weight: 700; color: #fff; background: linear-gradient(#6a6a6a, #8c8c8c); }
.layouts .plus { width: 24px; margin-left: 4px; }
.status { display: flex; height: 24px; background: #4a4a4a; border: 1px solid #777; border-right: 0; }
.group { display: flex; align-items: center; justify-content: space-around; padding: 0 2px; border-right: 2px solid #777; }
.status .caret::after { border-width: 4px 3px 0; border-top-color: #fff; }
.status .caret { width: 8px; height: 20px; }
.txt { font-size: 12px; color: #fff; }
.scale { font-size: 11px; font-weight: 600; }
.g-model { width: 46px; }
.g-grid { width: 63px; }
.g-ortho { width: 97px; }
.g-snap { width: 60px; }
.g-ann { width: 101px; }
.g-gear { width: 39px; }
.g-one { width: 24px; }
.g-two { width: 25px; }
.g-end { width: 49px; }
</style>
